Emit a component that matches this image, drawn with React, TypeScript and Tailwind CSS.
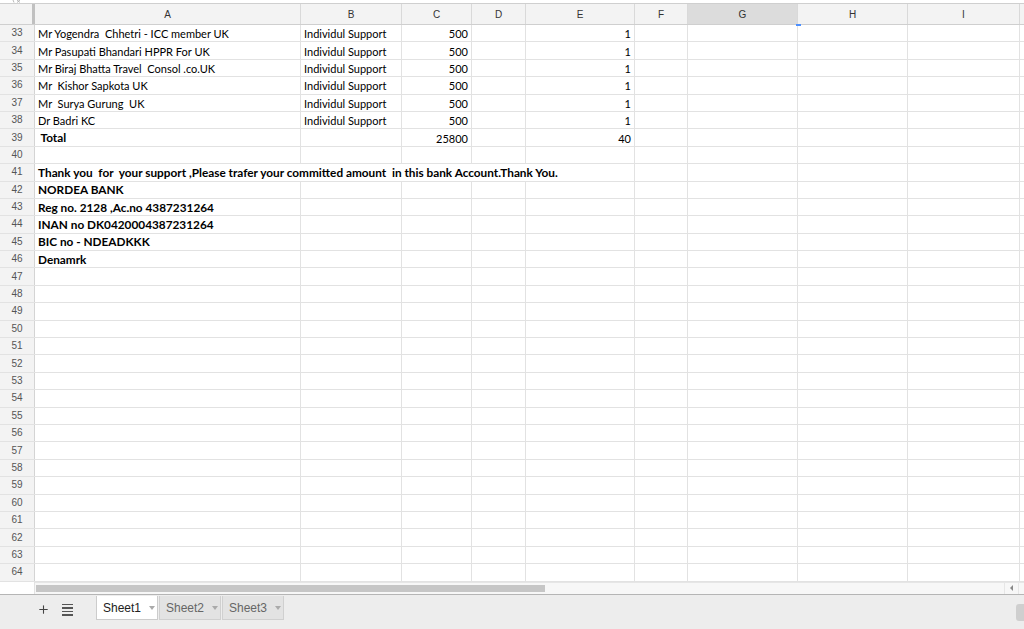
import { Plus } from 'lucide-react';

type Cell = { text: string; align?: 'left' | 'right'; bold?: boolean; span?: number };

const columns = ['A', 'B', 'C', 'D', 'E', 'F', 'G', 'H', 'I'];
const widths = ['w-[266px]', 'w-[101px]', 'w-[70px]', 'w-[54px]', 'w-[109px]', 'w-[53px]', 'w-[110px]', 'w-[110px]', 'w-[112px]'];

const rows: Record<number, Record<number, Cell>> = {
  33: { 0: { text: 'Mr Yogendra  Chhetri - ICC member UK' }, 1: { text: 'Individul Support' }, 2: { text: '500', align: 'right' }, 4: { text: '1', align: 'right' } },
  34: { 0: { text: 'Mr Pasupati Bhandari HPPR For UK' }, 1: { text: 'Individul Support' }, 2: { text: '500', align: 'right' }, 4: { text: '1', align: 'right' } },
  35: { 0: { text: 'Mr Biraj Bhatta Travel  Consol .co.UK' }, 1: { text: 'Individul Support' }, 2: { text: '500', align: 'right' }, 4: { text: '1', align: 'right' } },
  36: { 0: { text: 'Mr  Kishor Sapkota UK' }, 1: { text: 'Individul Support' }, 2: { text: '500', align: 'right' }, 4: { text: '1', align: 'right' } },
  37: { 0: { text: 'Mr  Surya Gurung  UK' }, 1: { text: 'Individul Support' }, 2: { text: '500', align: 'right' }, 4: { text: '1', align: 'right' } },
  38: { 0: { text: 'Dr Badri KC' }, 1: { text: 'Individul Support' }, 2: { text: '500', align: 'right' }, 4: { text: '1', align: 'right' } },
  39: { 0: { text: ' Total', bold: true }, 2: { text: '25800', align: 'right' }, 4: { text: '40', align: 'right' } },
  41: { 0: { text: 'Thank you  for  your support ,Please trafer your committed amount  in this bank Account.Thank You.', bold: true, span: 5 } },
  42: { 0: { text: 'NORDEA BANK', bold: true } },
  43: { 0: { text: 'Reg no. 2128 ,Ac.no 4387231264', bold: true } },
  44: { 0: { text: 'INAN no DK0420004387231264', bold: true } },
  45: { 0: { text: 'BIC no - NDEADKKK', bold: true } },
  46: { 0: { text: 'Denamrk', bold: true } },
};

const rowNumbers = Array.from({ length: 32 }, (_, i) => 33 + i);

// pixel widths to size spanned cells
const px = [266, 101, 70, 54, 109, 53, 110, 110, 112];

function Row({ n }: { n: number }) {
  const data = rows[n] || {};
  const cells = [];
  for (let c = 0; c < columns.length; c++) {
    const cell = data[c];
    const span = cell?.span ?? 1;
    const w = px.slice(c, c + span).reduce((a, b) => a + b, 0);
    cells.push(
      <div
        key={c}
        style={span > 1 ? { width: w } : undefined}
        className={`${span > 1 ? '' : widths[c]} shrink-0 h-full border-r border-[#e2e2e2] flex items-center overflow-visible whitespace-pre px-[3px] pt-[1px] text-black ${
          cell?.align === 'right' ? 'justify-end' : 'justify-start'
        } ${cell?.bold ? 'font-bold text-[11.8px]' : 'text-[11px]'}`}
      >
        {cell?.text}
      </div>
    );
    c += span - 1;
  }
  return (
    <div className="flex h-[17.4px] border-b border-[#e2e2e2] bg-white font-['Lato',sans-serif] leading-none">
      <div className="w-[35px] shrink-0 h-full bg-[#f3f3f3] border-r border-[#d4d4d4] flex items-center justify-center text-[10px] text-[#555] font-['Liberation_Sans',Arial,sans-serif]">
        {n}
      </div>
      {cells}
      <div className="flex-1 h-full" />
    </div>
  );
}

export default function App() {
  return (
    <div className="w-[1024px] h-[629px] overflow-hidden bg-white flex flex-col relative font-['Liberation_Sans',Arial,sans-serif]">
      <div className="h-[3px] overflow-hidden relative bg-white">
        <svg className="absolute left-[12px] top-0" width="10" height="3" viewBox="0 0 10 3">
          <path d="M1 0 L2 2.5 M5 0 L8 2.5 M8 0 L5 2.5" stroke="#aaa" strokeWidth="0.8" fill="none" />
        </svg>
      </div>

      {/* column header */}
      <div className="h-[22px] flex border-t border-[#cfcfcf] bg-[#f3f3f3] border-b border-[#cccccc] text-[10px] text-[#333] relative">
        <div className="w-[35px] shrink-0 h-full border-r-[3px] border-[#c0c0c0] bg-[#f3f3f3]" />
        {columns.map((col, i) => (
          <div
            key={col}
            className={`${widths[i]} shrink-0 h-full border-r border-[#d9d9d9] flex items-center justify-center ${
              col === 'G' ? 'bg-[#dcdcdc]' : ''
            }`}
          >
            {col}
          </div>
        ))}
        <div className="flex-1" />
        <div className="absolute left-[796px] bottom-[-2px] w-[5px] h-[2px] bg-[#4d90fe]" />
      </div>

      <div className="flex flex-col">
        {rowNumbers.map((n) => (
          <Row key={n} n={n} />
        ))}
      </div>

      {/* horizontal scrollbar */}
      <div className="flex-1 flex border-b border-[#b5b5b5]">
        <div className="w-[35px] shrink-0 bg-white border-r border-[#e2e2e2]" />
        <div className="flex-1 bg-[#f7f7f7] border-t border-[#e6e6e6] flex items-center pl-[1px]">
          <div className="w-[509px] h-[7px] bg-[#c6c6c6]" />
        </div>
        <div className="w-[14px] bg-[#f7f7f7] border-t border-l border-[#e6e6e6] flex items-center justify-center">
          <div className="w-0 h-0 border-y-[3px] border-y-transparent border-r-[3px] border-r-[#888]" />
        </div>
        <div className="w-[6px] bg-[#f7f7f7] border-t border-l border-[#e6e6e6]" />
      </div>

      {/* sheet tabs */}
      <div className="h-[34px] shrink-0 bg-[#ededed] flex items-start relative">
        <div className="w-[96px] h-[28px] flex items-center pl-[37px] gap-[12px] pt-[1px] text-[#444]">
          <Plus size={13} strokeWidth={2} />
          <div className="flex flex-col gap-[2px] w-[11px]">
            <div className="h-[1.5px] bg-[#555]" />
            <div className="h-[1.5px] bg-[#555]" />
            <div className="h-[1.5px] bg-[#555]" />
            <div className="h-[1.5px] bg-[#555]" />
          </div>
        </div>
        <div className="flex gap-[1px] pt-[1px]">
          <div className="w-[62px] h-[24px] bg-white border-x border-b border-[#cccccc] flex items-center pl-[6px] text-[12px] text-[#222]">
            Sheet1
            <span className="ml-[8px] w-0 h-0 border-x-[3px] border-x-transparent border-t-[4px] border-t-[#aaa]" />
          </div>
          <div className="w-[62px] h-[24px] bg-[#e3e3e3] border-x border-b border-[#d0d0d0] flex items-center pl-[6px] text-[12px] text-[#666]">
            Sheet2
            <span className="ml-[8px] w-0 h-0 border-x-[3px] border-x-transparent border-t-[4px] border-t-[#aaa]" />
          </div>
          <div className="w-[62px] h-[24px] bg-[#e3e3e3] border-x border-b border-[#d0d0d0] flex items-center pl-[6px] text-[12px] text-[#666]">
            Sheet3
            <span className="ml-[8px] w-0 h-0 border-x-[3px] border-x-transparent border-t-[4px] border-t-[#aaa]" />
          </div>
        </div>
        <div className="absolute right-[-8px] top-[9px] w-[16px] h-[17px] rounded-[3px] bg-[#cfcfcf]" />
      </div>
    </div>
  );
}
